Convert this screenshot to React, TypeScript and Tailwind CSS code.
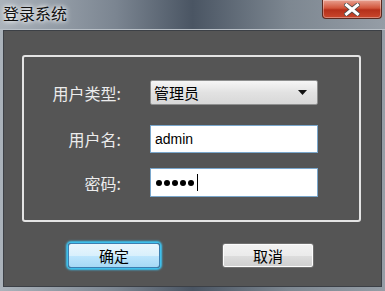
const cjk = "font-['Microsoft_YaHei','Noto_Sans_CJK_SC',sans-serif]";

function CloseButton() {
  return (
    <button
      type="button"
      className="flex h-[19px] w-[60px] items-center justify-center rounded-b-[4px] border border-t-0 border-[#5a2a20] bg-[linear-gradient(#e8a191_0%,#d2563c_45%,#b5301a_55%,#c9472c_100%)] shadow-[inset_0_0_0_1px_rgba(255,255,255,0.35)]"
    >
      <svg width="16" height="13" viewBox="0 0 16 13">
        <path
          d="M2.5 2 L13.5 11 M13.5 2 L2.5 11"
          stroke="#4a4a4a"
          strokeWidth="4.6"
          strokeLinecap="square"
        />
        <path
          d="M2.5 2 L13.5 11 M13.5 2 L2.5 11"
          stroke="#ffffff"
          strokeWidth="3"
          strokeLinecap="square"
        />
      </svg>
    </button>
  );
}

function Field({ label, children }: { label: string; children: React.ReactNode }) {
  return (
    <div className="flex items-center">
      <span className="w-[97px] text-right text-[16px] text-[#ececec]">{label}</span>
      <div className="ml-[29px] w-[168px]">{children}</div>
    </div>
  );
}

export default function App() {
  return (
    <div
      className={`flex h-[291px] w-[385px] flex-col bg-[linear-gradient(90deg,#abb3bb_0%,#7b8591_30%,#4a5563_50%,#7d8791_75%,#959da6_100%)] ${cjk}`}
    >
      <div className="flex h-[30px] shrink-0 items-start justify-between border-b border-[#b9c0c7]">
        <span className="ml-[3px] mt-[4px] text-[16px] leading-[18px] text-[#111] [text-shadow:0_0_6px_#ffffff,0_0_4px_#ffffff]">
          登录系统
        </span>
        <div className="mr-[3px]">
          <CloseButton />
        </div>
      </div>

      <div className="mx-[3px] mb-[4px] flex flex-1 flex-col border border-[#3c4046] bg-[#555555]">
        <div className="ml-[18px] mt-[24px] h-[167px] w-[339px] rounded-[3px] border-2 border-[#e4e4e4] pt-[23px]">
          <div className="flex flex-col">
            <Field label="用户类型:">
              <div className="flex h-[25px] items-center justify-between rounded-[2px] border border-[#8e8f8f] bg-[linear-gradient(#f6f6f6,#e2e2e2_50%,#d8d8d8)] pl-[3px] pr-[10px]">
                <span className="text-[15px] leading-none text-black">管理员</span>
                <svg width="9" height="5" viewBox="0 0 9 5">
                  <path d="M0 0 H9 L4.5 5 Z" fill="#111" />
                </svg>
              </div>
            </Field>
            <div className="mt-[20px]">
              <Field label="用户名:">
                <div className="flex h-[28px] items-center border border-[#7aa7cc] bg-white pl-[4px] font-['Liberation_Sans',sans-serif] text-[14px] text-black">
                  admin
                </div>
              </Field>
            </div>
            <div className="mt-[15px]">
              <Field label="密码:">
                <div className="flex h-[29px] items-center gap-[2px] border border-[#7aa7cc] bg-white pl-[5px]">
                  {[0, 1, 2, 3, 4].map((i) => (
                    <span key={i} className="h-[6px] w-[6px] rounded-full bg-black" />
                  ))}
                  <span className="ml-[1px] h-[17px] w-[1px] bg-black" />
                </div>
              </Field>
            </div>
          </div>
        </div>

        <div className="mt-[21px] flex">
          <button
            type="button"
            className="ml-[64px] h-[25px] w-[92px] rounded-[3px] border border-[#3c7fb1] bg-[linear-gradient(#eaf6fd,#d9f0fc_50%,#bee6fd_51%,#a7d9f5)] text-[15px] leading-none text-black shadow-[0_0_2px_2px_#3fc7f5]"
          >
            确定
          </button>
          <button
            type="button"
            className="ml-[62px] h-[25px] w-[92px] rounded-[3px] border border-[#707070] bg-[linear-gradient(#f2f2f2,#ebebeb_50%,#dddddd_51%,#cfcfcf)] text-[15px] leading-none text-black shadow-[inset_0_0_0_1px_#fcfcfc]"
          >
            取消
          </button>
        </div>
      </div>
    </div>
  );
}
